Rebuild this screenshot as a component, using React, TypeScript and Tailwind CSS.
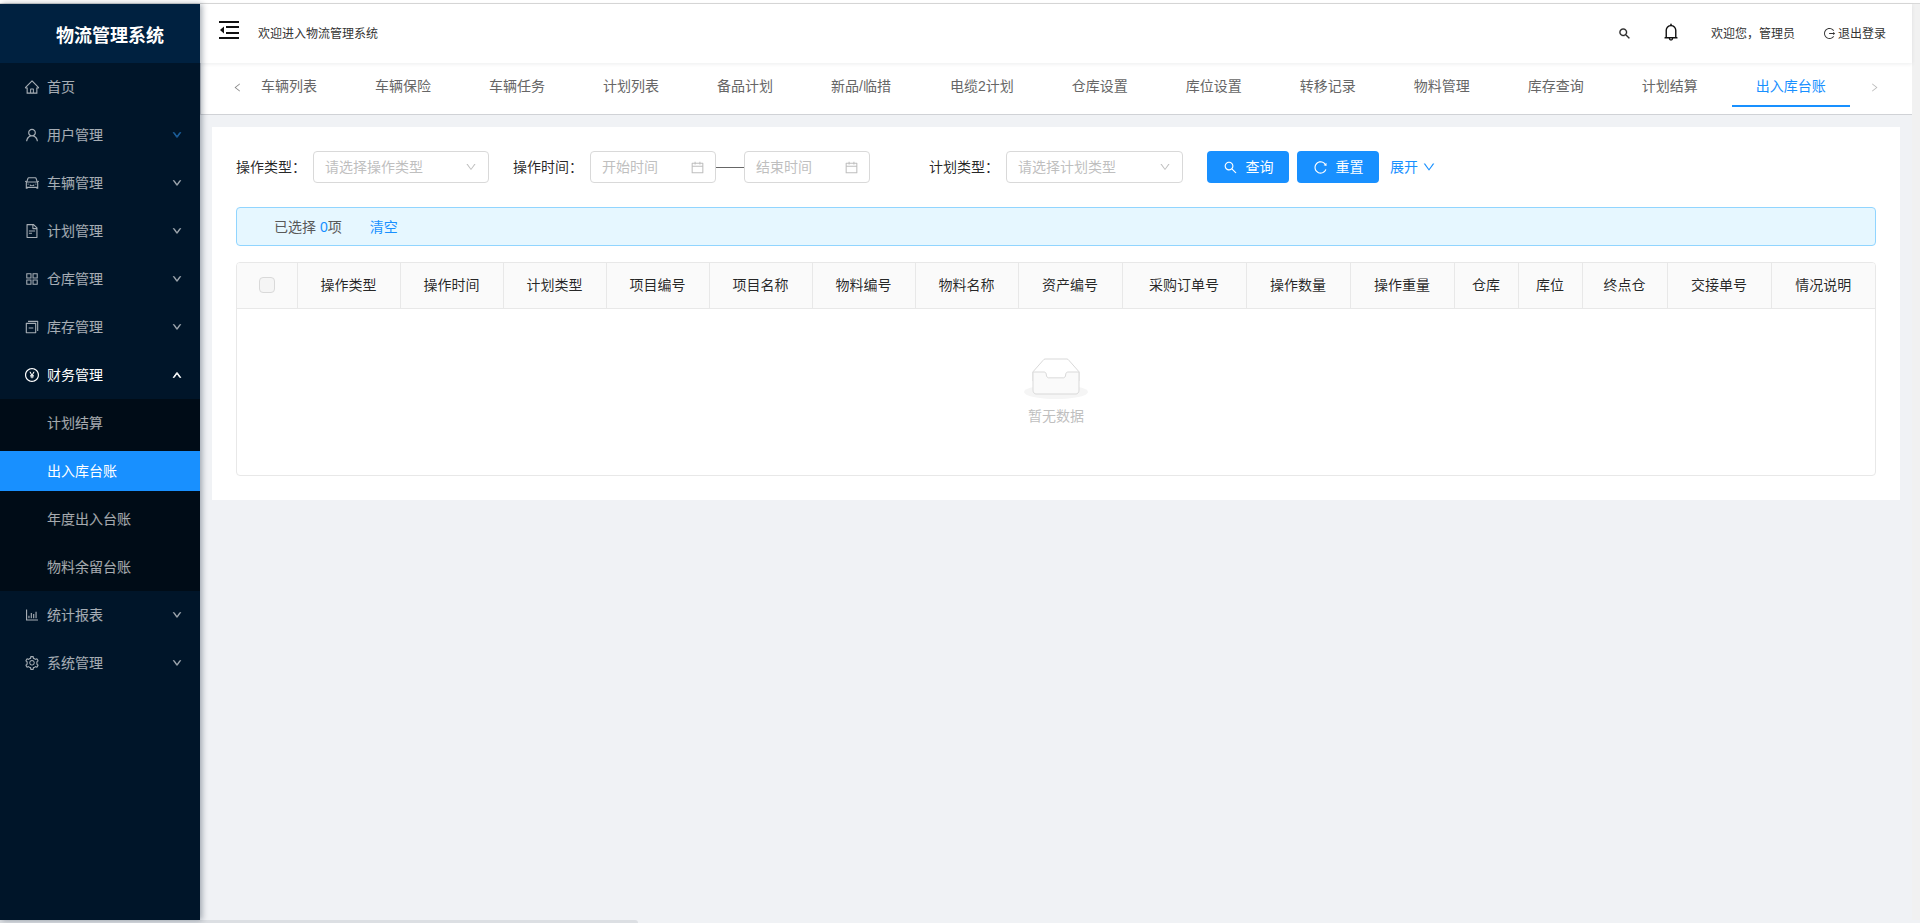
import type { ReactNode } from 'react'
import {
  AiOutlineAppstore,
  AiOutlineBarChart,
  AiOutlineBell,
  AiOutlineCalendar,
  AiOutlineCar,
  AiOutlineDown,
  AiOutlineFileText,
  AiOutlineHome,
  AiOutlineLeft,
  AiOutlineLogout,
  AiOutlinePayCircle,
  AiOutlineReload,
  AiOutlineRight,
  AiOutlineSearch,
  AiOutlineSetting,
  AiOutlineSwitcher,
  AiOutlineUp,
  AiOutlineUser,
} from 'react-icons/ai'

const topMenu = [
  { label: '首页', icon: <AiOutlineHome />, arrow: false },
  { label: '用户管理', icon: <AiOutlineUser />, arrow: true, arrowClass: 'text-[#1c5f9c]' },
  { label: '车辆管理', icon: <AiOutlineCar />, arrow: true },
  { label: '计划管理', icon: <AiOutlineFileText />, arrow: true },
  { label: '仓库管理', icon: <AiOutlineAppstore />, arrow: true },
  { label: '库存管理', icon: <AiOutlineSwitcher />, arrow: true },
]

const bottomMenu = [
  { label: '统计报表', icon: <AiOutlineBarChart />, arrow: true },
  { label: '系统管理', icon: <AiOutlineSetting />, arrow: true },
]

const tabs = [
  '车辆列表',
  '车辆保险',
  '车辆任务',
  '计划列表',
  '备品计划',
  '新品/临措',
  '电缆2计划',
  '仓库设置',
  '库位设置',
  '转移记录',
  '物料管理',
  '库存查询',
  '计划结算',
]

const columns = [
  { label: '操作类型', width: 'w-[103px]' },
  { label: '操作时间', width: 'w-[103px]' },
  { label: '计划类型', width: 'w-[103px]' },
  { label: '项目编号', width: 'w-[103px]' },
  { label: '项目名称', width: 'w-[103px]' },
  { label: '物料编号', width: 'w-[103px]' },
  { label: '物料名称', width: 'w-[103px]' },
  { label: '资产编号', width: 'w-[104px]' },
  { label: '采购订单号', width: 'w-[124px]' },
  { label: '操作数量', width: 'w-[104px]' },
  { label: '操作重量', width: 'w-[104px]' },
  { label: '仓库', width: 'w-[64px]' },
  { label: '库位', width: 'w-[64px]' },
  { label: '终点仓', width: 'w-[85px]' },
  { label: '交接单号', width: 'w-[104px]' },
  { label: '情况说明', width: 'w-[104px]' },
]

function MenuItem({ label, icon, arrow, arrowClass, open }: { label: string; icon: ReactNode; arrow: boolean; arrowClass?: string; open?: boolean }) {
  return (
    <div className={`flex h-12 items-center pl-6 pr-[18px] ${open ? 'text-white' : 'text-white/65'}`}>
      <span className="w-[23px] text-[16px]">{icon}</span>
      <span className="flex-1">{label}</span>
      {arrow && (open ? <AiOutlineUp className="text-[10px] text-white stroke-[100]" /> : <AiOutlineDown className={`text-[10px] stroke-[100] ${arrowClass ?? 'text-white/45'}`} />)}
    </div>
  )
}

function Sidebar() {
  return (
    <aside className="z-20 flex w-[200px] shrink-0 flex-col bg-[#001529] shadow-[2px_0_6px_rgba(0,21,41,0.35)]">
      <div className="flex h-[59px] items-center bg-[#002140] pl-[56px] pt-[5px] text-lg font-bold text-white">物流管理系统</div>
      {topMenu.map((item) => (
        <MenuItem key={item.label} {...item} />
      ))}
      <MenuItem label="财务管理" icon={<AiOutlinePayCircle />} arrow open />
      <div className="bg-[#000c17]">
        <div className="flex h-12 items-center pl-[47px] text-white/65">计划结算</div>
        <div className="my-1 flex h-10 items-center bg-[#1890ff] pl-[47px] text-white">出入库台账</div>
        <div className="flex h-12 items-center pl-[47px] text-white/65">年度出入台账</div>
        <div className="flex h-12 items-center pl-[47px] text-white/65">物料余留台账</div>
      </div>
      {bottomMenu.map((item) => (
        <MenuItem key={item.label} {...item} />
      ))}
    </aside>
  )
}

function Header() {
  return (
    <header className="relative z-10 flex h-[59px] shrink-0 items-center bg-white pl-[19px] pr-[26px] text-xs text-[#333] shadow-[0_1px_4px_rgba(0,21,41,0.08)]">
      <svg width="20" height="18" viewBox="0 0 20 18" className="mb-[7px]" fill="#111">
        <rect x="0" y="0" width="20" height="2" />
        <rect x="7" y="5" width="13" height="2" />
        <rect x="7" y="11" width="13" height="2" />
        <rect x="0" y="16" width="20" height="2" />
        <path d="M5 5.5v7L1 9z" />
      </svg>
      <span className="ml-[19px] flex-1">欢迎进入物流管理系统</span>
      <AiOutlineSearch className="text-[13px] text-[#222] stroke-[30]" />
      <AiOutlineBell className="ml-[30px] mb-[3px] text-[20px] text-[#111]" />
      <span className="ml-[30px]">欢迎您，管理员</span>
      <AiOutlineLogout className="ml-[28px] mr-[2px] text-[13px]" />
      <span>退出登录</span>
    </header>
  )
}

function TabBar() {
  return (
    <nav className="relative flex h-[52px] shrink-0 border-b border-l border-[#d0d2d6] bg-white pl-[36px] text-[#666]">
      <AiOutlineLeft className="absolute left-[31px] top-[19px] text-[11px] text-[#888]" />
      {tabs.map((tab) => (
        <div key={tab} className={`flex h-[44px] items-center border-b-2 border-transparent px-6 pt-[4px] ${tab === '新品/临措' ? 'mr-[11px]' : 'mr-[10px]'}`}>
          {tab}
        </div>
      ))}
      <div className="flex h-[44px] items-center border-b-2 border-[#1890ff] px-6 pt-[4px] text-[#1890ff]">出入库台账</div>
      <AiOutlineRight className="absolute right-[32px] top-[19px] text-[11px] text-[#bbb]" />
    </nav>
  )
}

function SelectBox({ placeholder, width }: { placeholder: string; width: string }) {
  return (
    <div className={`flex h-8 items-center justify-between rounded border border-[#d9d9d9] pl-[11px] pr-[11px] text-[#bfbfbf] ${width}`}>
      <span>{placeholder}</span>
      <AiOutlineDown className="text-[12px]" />
    </div>
  )
}

function DateBox({ placeholder }: { placeholder: string }) {
  return (
    <div className="flex h-8 w-[126px] items-center justify-between rounded border border-[#d9d9d9] pl-[11px] pr-[10px] text-[#bfbfbf]">
      <span>{placeholder}</span>
      <AiOutlineCalendar className="text-[15px]" />
    </div>
  )
}

function SearchForm() {
  return (
    <div className="flex items-center text-black/85">
      <label className="w-[77px]">操作类型：</label>
      <SelectBox placeholder="请选择操作类型" width="w-[176px]" />
      <label className="ml-6 w-[77px]">操作时间：</label>
      <DateBox placeholder="开始时间" />
      <div className="h-px w-[28px] bg-[#666]" />
      <DateBox placeholder="结束时间" />
      <label className="ml-[59px] w-[77px]">计划类型：</label>
      <SelectBox placeholder="请选择计划类型" width="w-[177px]" />
      <button className="ml-6 flex h-8 w-[82px] items-center justify-center gap-2 rounded bg-[#1890ff] text-white">
        <AiOutlineSearch className="text-[15px]" />
        查询
      </button>
      <button className="ml-2 flex h-8 w-[82px] items-center justify-center gap-2 rounded bg-[#1890ff] text-white">
        <AiOutlineReload className="text-[15px]" />
        重置
      </button>
      <span className="ml-[11px] flex items-center gap-1 text-[#1890ff]">
        展开
        <AiOutlineDown className="text-[14px]" />
      </span>
    </div>
  )
}

function EmptyBox() {
  return (
    <svg width="64" height="41" viewBox="0 0 64 41" className="mx-auto">
      <g transform="translate(0 1)" fill="none" fillRule="evenodd">
        <ellipse fill="#f5f5f5" cx="32" cy="33" rx="32" ry="7" />
        <g fillRule="nonzero" stroke="#d9d9d9">
          <path d="M55 12.76L44.854 1.258C44.367.474 43.656 0 42.907 0H21.093c-.749 0-1.46.474-1.947 1.257L9 12.761V22h46v-9.24z" />
          <path
            d="M41.613 15.931c0-1.605.994-2.93 2.227-2.931H55v18.137C55 33.26 53.68 35 52.05 35h-40.1C10.32 35 9 33.259 9 31.137V13h11.16c1.233 0 2.227 1.323 2.227 2.928v.022c0 1.605 1.005 2.901 2.237 2.901h14.752c1.232 0 2.237-1.308 2.237-2.913v-.007z"
            fill="#fafafa"
          />
        </g>
      </g>
    </svg>
  )
}

function DataTable() {
  return (
    <div className="mt-4 overflow-hidden rounded border border-[#e8e8e8]">
      <table className="w-full table-fixed">
        <thead>
          <tr className="h-[45px] bg-[#fafafa] text-black/85">
            <th className="w-[60px] border-r border-b border-[#e8e8e8]">
              <span className="ml-[22px] block h-4 w-4 rounded-sm border border-[#d9d9d9] bg-[#f5f5f5]" />
            </th>
            {columns.map((col, i) => (
              <th key={col.label} className={`${col.width} border-b border-[#e8e8e8] font-normal ${i < columns.length - 1 ? 'border-r' : ''}`}>
                {col.label}
              </th>
            ))}
          </tr>
        </thead>
        <tbody>
          <tr>
            <td colSpan={17} className="h-[167px] pt-[49px] align-top text-center text-[#bfbfbf]">
              <EmptyBox />
              <div className="mt-[6px] leading-[22px]">暂无数据</div>
            </td>
          </tr>
        </tbody>
      </table>
    </div>
  )
}

export default function App() {
  return (
    <div className="flex h-[923px] w-[1920px] flex-col overflow-hidden bg-white font-['Liberation_Sans','Noto_Sans_CJK_SC',sans-serif] text-sm">
      <div className="h-1 shrink-0 border-b border-[#d9d9d9] bg-white" />
      <div className="flex min-h-0 flex-1">
        <Sidebar />
        <div className="flex min-w-0 flex-1 flex-col bg-[#f0f2f5]">
          <Header />
          <TabBar />
          <main className="p-3">
            <section className="bg-white p-6">
              <SearchForm />
              <div className="mt-6 flex h-[39px] items-center rounded border border-[#91d5ff] bg-[#e6f7ff] pl-[37px] text-[#595959]">
                <span>
                  已选择 <span className="text-[#1890ff]">0</span>项
                </span>
                <span className="ml-[28px] text-[#1890ff]">清空</span>
              </div>
              <DataTable />
            </section>
          </main>
        </div>
        <div className="w-2 shrink-0 bg-[#f1f1f1]" />
      </div>
      <div className="h-[3px] shrink-0 bg-[#f0f2f5]">
        <div className="h-full w-[638px] rounded-tr-sm bg-[#dcdfe3]" />
      </div>
    </div>
  )
}
